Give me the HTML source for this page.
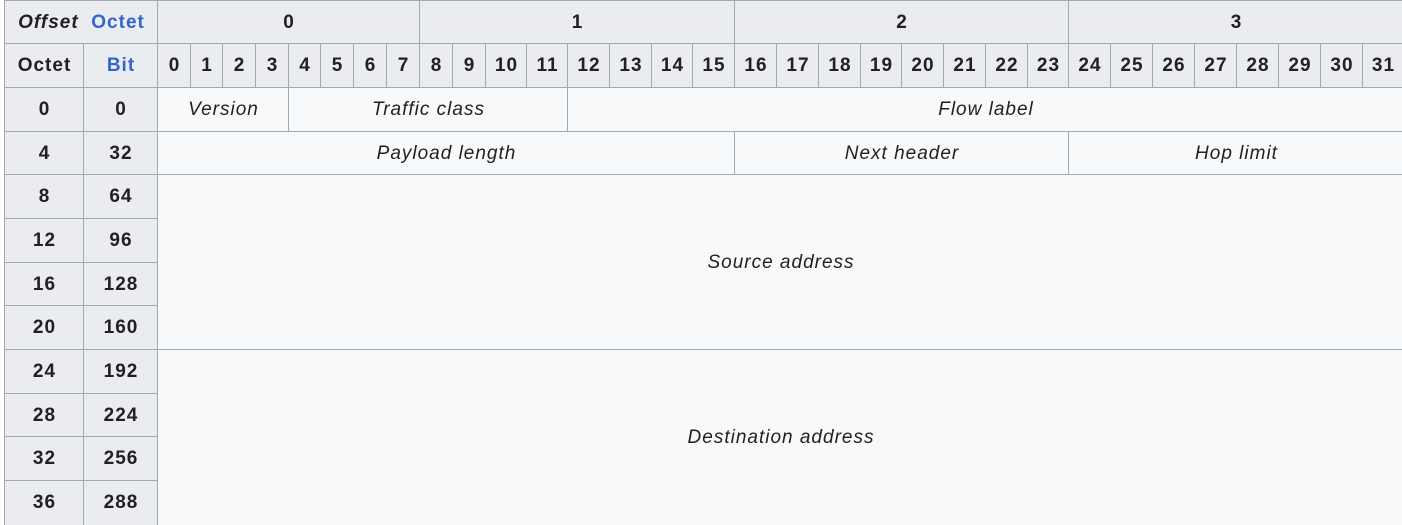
<!DOCTYPE html>
<html><head><meta charset="utf-8"><style>
html,body{margin:0;padding:0;width:1402px;height:523px;overflow:hidden;background:#fff;}
.c{position:absolute;box-sizing:border-box;border-left:1px solid #a2a9b1;border-top:1px solid #a2a9b1;display:flex;align-items:center;justify-content:center;font-family:"Liberation Sans",Arial,sans-serif;font-size:19px;letter-spacing:1px;color:#202122;white-space:nowrap;overflow:hidden;}
.h{background:#eaecf0;font-weight:bold;}
.d{background:#f8f9fa;font-style:italic;}
.b{color:#3366cc;}
</style></head><body>
<div id="t"></div>
<script>
var H=[];
function c(x1,x2,y1,y2,t,cls){H.push('<div class="c '+cls+'" style="left:'+x1+'px;top:'+y1+'px;width:'+(x2-x1+1)+'px;height:'+(y2-y1+1)+'px">'+t+'</div>');}
c(4,157,0,43,'<i>Offset</i>&nbsp;&nbsp;<span class="b">Octet</span>','h');
var oc=[157,419,734,1068,1403];
for(var i=0;i<4;i++)c(oc[i],oc[i+1],0,43,i,'h');
c(4,83,43,87,'Octet','h');c(83,157,43,87,'<span class="b">Bit</span>','h');
var bx=[157,190,222,255,288,320,353,386,419,452,485,526,567,609,651,692,734,776,818,860,901,943,985,1027,1068,1110,1152,1194,1236,1278,1320,1362,1403];
for(var i=0;i<32;i++)c(bx[i],bx[i+1],43,87,i,'h');
var ry=[87,131,174,218,262,305,349,393,436,480,524];
for(var r=0;r<10;r++){c(4,83,ry[r],ry[r+1],r*4,'h');c(83,157,ry[r],ry[r+1],r*32,'h');}
c(157,288,87,131,'Version','d');c(288,567,87,131,'Traffic class','d');c(567,1403,87,131,'Flow label','d');
c(157,734,131,174,'Payload length','d');c(734,1068,131,174,'Next header','d');c(1068,1403,131,174,'Hop limit','d');
c(157,1403,174,349,'Source address','d');c(157,1403,349,524,'Destination address','d');
document.getElementById('t').innerHTML=H.join('');
</script>
</body></html>
